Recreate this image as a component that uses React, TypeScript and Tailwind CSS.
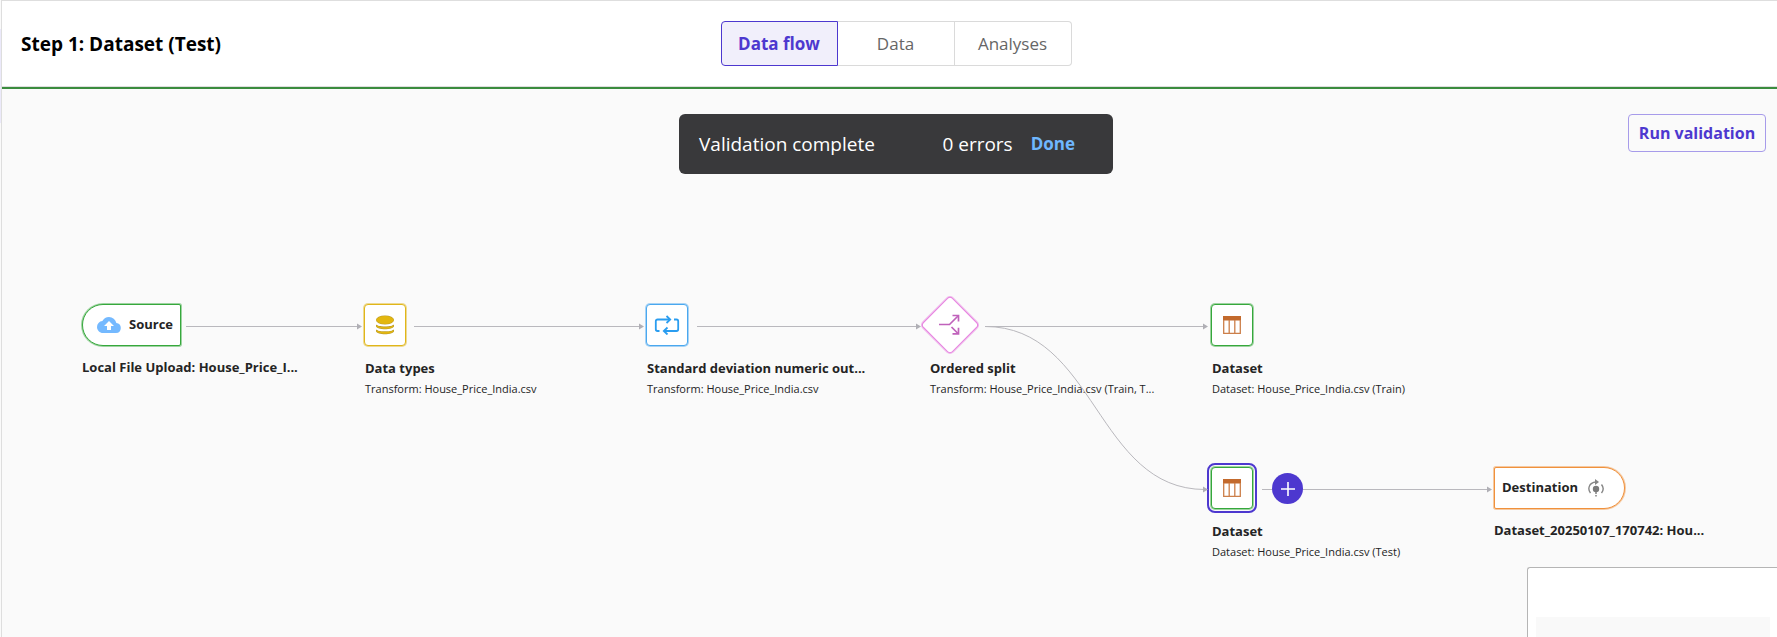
import type { ReactNode } from "react";

const tabs = ["Data flow", "Data", "Analyses"];

function CloudIcon() {
  return (
    <svg viewBox="0 0 24 16" className="h-4 w-6" aria-hidden="true">
      <path
        fill="#74b9ff"
        d="M19.35 6.04A7.49 7.49 0 0 0 12 0C9.11 0 6.6 1.64 5.35 4.04A5.99 5.99 0 0 0 0 10c0 3.31 2.69 6 6 6h13a5 5 0 0 0 .35-9.96z"
      />
      <path fill="#fff" d="M12 4l5 5h-3v4h-4V9H7z" />
    </svg>
  );
}

function DatabaseIcon() {
  return (
    <svg viewBox="0 0 20 20" className="size-5" aria-hidden="true">
      <g fill="#b99a2c">
        <path d="M1 14c1 2.500 17 2.500 18 0v2.300c-1 4-17 4-18 0z" />
        <path d="M1 9c1 3 17 3 18 0v2.300c-1 4-17 4-18 0z" />
        <ellipse cx="10" cy="5" rx="9" ry="4.600" />
      </g>
      <g fill="#e3b70f">
        <path d="M1.500 15c1.500 2.500 15.500 2.500 17 0v1.300c-1.500 3.300-15.500 3.300-17 0z" />
        <path d="M1.500 10c1.500 3 15.500 3 17 0v1.300c-1.500 3.300-15.500 3.300-17 0z" />
        <ellipse cx="10" cy="5" rx="8.600" ry="4" />
      </g>
      <path d="M1 8.300c2 3 16 3 18 0M1 13.300c2 3 16 3 18 0" fill="none" stroke="#fff" strokeWidth="1.300" />
    </svg>
  );
}

function RepeatIcon() {
  return (
    <svg viewBox="0 0 26 20" className="h-5 w-[26px]" fill="none" stroke="#2a9df0" strokeWidth="1.800" aria-hidden="true">
      <path d="M5.500 16H3.500A1.700 1.700 0 0 1 1.800 14.300V6.200A1.700 1.700 0 0 1 3.500 4.500H16" />
      <path d="M12.500 1l3.700 3.500-3.700 3.500" />
      <path d="M20 4.500h2.500a1.700 1.700 0 0 1 1.700 1.700v8.100a1.700 1.700 0 0 1-1.700 1.700H10" />
      <path d="M13.500 12.500L9.800 16l3.700 3.500" />
    </svg>
  );
}

function SplitIcon() {
  return (
    <svg viewBox="0 0 22 22" className="size-[22px]" fill="none" stroke="#c062bb" strokeWidth="1.700" aria-hidden="true">
      <path d="M0 10.500h10.500L19 2" />
      <path d="M13.500 1.500H19.500V7.500" />
      <path d="M12.500 13l6.500 6.500" />
      <path d="M13.500 19.800H19.500v-6" />
    </svg>
  );
}

function TableIcon() {
  return (
    <svg viewBox="0 0 18 18" className="size-[18px]" aria-hidden="true">
      <rect width="18" height="4.500" fill="#c36a2d" />
      <path d="M.7 4v13.300h16.600V4M6.200 4v13M11.800 4v13" fill="none" stroke="#cc7f4a" strokeWidth="1.300" />
    </svg>
  );
}

function DeployIcon() {
  return (
    <svg viewBox="0 0 16 18" className="h-[18px] w-4" aria-hidden="true">
      <g fill="none" stroke="#858585" strokeWidth="1.400">
        <path d="M2.500 14C-.5 10.500.5 3.500 8 3" />
        <path d="M13.500 14c2-2.500 2-6 0-8.500" />
      </g>
      <path d="M7 0l4 3-4 3z" fill="#858585" />
      <circle cx="8" cy="10" r="3.200" fill="#7a7a7a" />
      <path d="M7.300 12h1.400v3H7.300zM7.300 16h1.400v1.500H7.300z" fill="#7a7a7a" />
    </svg>
  );
}

function Tile({ tone, children }: { tone: string; children: ReactNode }) {
  return (
    <button type="button" className={`flex size-[42px] items-center justify-center rounded-[4px] border bg-white ${tone}`}>
      {children}
    </button>
  );
}

function Labels({ title, detail }: { title: string; detail?: string }) {
  return (
    <div className={detail ? "mt-3 pl-px whitespace-nowrap" : "mt-[11px] whitespace-nowrap"}>
      <h2 className="text-[13px] leading-5 font-bold">{title}</h2>
      {detail && <p className="text-[11px] leading-[22px]">{detail}</p>}
    </div>
  );
}

export default function App() {
  return (
    <div className="flex min-h-screen bg-[#fafafa] font-['Open_Sans','Noto_Sans',sans-serif] text-[#242424]">
      <div className="w-px bg-[#fafafa] pt-[29px]">
        <div className="h-[94px] bg-[#ebe9fa]" />
      </div>
      <div className="flex min-w-0 flex-1 flex-col border-t border-l border-[#dedede]">
        <header className="grid grid-cols-[1fr_auto_1fr] items-center border-b border-[#dedede] bg-white py-5 pr-[6px] pl-[19px]">
          <h1 className="text-[19px] leading-7 font-bold text-black">Step 1: Dataset (Test)</h1>
          <nav className="flex">
            {tabs.map((tab, i) => (
              <button
                key={tab}
                type="button"
                className={
                  i === 0
                    ? "h-[45px] w-[117px] rounded-l-[4px] border border-[#4d38cf] bg-[#f1effb] text-[17px] font-bold text-[#4d38cf]"
                    : "h-[45px] w-[117px] border border-l-0 border-[#dadada] text-[17px] text-[#666] last:rounded-r-[4px]"
                }
              >
                {tab}
              </button>
            ))}
          </nav>
        </header>

        <main className="relative flex-1 overflow-hidden border-t-2 border-[#3b8c3e]">
          <div className="grid grid-cols-[1fr_auto_1fr] items-start pt-[25px] pr-[11px] pl-6">
            <div
              role="status"
              className="col-start-2 flex h-[60px] w-[434px] items-center rounded-[6px] bg-[#39393b] pr-[38px] pl-5 text-[19px] text-white"
            >
              <span className="flex-1">Validation complete</span>
              <span>0 errors</span>
              <button type="button" className="ml-[18px] text-[17px] font-bold text-[#6fb7ff]">
                Done
              </button>
            </div>
            <button
              type="button"
              className="h-[38px] w-[138px] justify-self-end rounded-[4px] border border-[#a79bea] text-base font-bold whitespace-nowrap text-[#4d38cf]"
            >
              Run validation
            </button>
          </div>

          <div className="absolute top-[215px] left-[80px]">
            <button
              type="button"
              className="flex h-[42px] w-[99px] items-center gap-2 rounded-l-[21px] rounded-r-[2px] border border-[#36a83c] bg-white pl-[14px] text-[13px] font-bold shadow-[0_0_0_1px_#36a83c77]"
            >
              <CloudIcon />
              Source
            </button>
            <Labels title="Local File Upload: House_Price_I..." />
          </div>
          <div className="absolute top-[215px] left-[362px]">
            <Tile tone="border-[#e0b61b] shadow-[0_0_0_1px_#e0b61b77]">
              <DatabaseIcon />
            </Tile>
            <Labels title="Data types" detail="Transform: House_Price_India.csv" />
          </div>
          <div className="absolute top-[215px] left-[644px]">
            <Tile tone="border-[#4aa8ef] shadow-[0_0_0_1px_#4aa8ef77]">
              <RepeatIcon />
            </Tile>
            <Labels title="Standard deviation numeric out..." detail="Transform: House_Price_India.csv" />
          </div>
          <div className="absolute top-[215px] left-[927px]">
            <button
              type="button"
              className="flex size-[42px] rotate-45 items-center justify-center rounded-[4px] border border-[#e67fdf] bg-white shadow-[0_0_0_1px_#e67fdf77]"
            >
              <span className="-rotate-45">
                <SplitIcon />
              </span>
            </button>
            <Labels title="Ordered split" detail="Transform: House_Price_India.csv (Train, T..." />
          </div>
          <div className="absolute top-[215px] left-[1209px]">
            <Tile tone="border-[#36a83c] shadow-[0_0_0_1px_#36a83c77]">
              <TableIcon />
            </Tile>
            <Labels title="Dataset" detail="Dataset: House_Price_India.csv (Train)" />
          </div>
          <div className="absolute top-[378px] left-[1209px]">
            <Tile tone="border-[#36a83c] shadow-[0_0_0_1px_#36a83c77] outline-2 outline-offset-2 outline-[#4d38cf]">
              <TableIcon />
            </Tile>
            <Labels title="Dataset" detail="Dataset: House_Price_India.csv (Test)" />
          </div>
          <div className="absolute top-[378px] left-[1492px]">
            <button
              type="button"
              className="flex h-[42px] w-[131px] items-center gap-[10px] rounded-l-[2px] rounded-r-[21px] border border-[#f0913c] bg-white pl-[7px] text-[13px] font-bold shadow-[0_0_0_1px_#f0913c77]"
            >
              Destination
              <DeployIcon />
            </button>
            <Labels title="Dataset_20250107_170742: Hou..." />
          </div>

          <svg
            width="1700"
            height="500"
            viewBox="0 0 1700 500"
            className="pointer-events-none absolute top-0 left-0"
            fill="none"
            stroke="#b9b8bd"
            aria-hidden="true"
          >
            <path d="M184 237.500H357M412 237.500H639M695 237.500H915M983 237.500H1203M1260 400.500H1486" />
            <path d="M983 237.500C1094 237.500 1094 400.500 1203 400.500" />
            <path
              fill="#b0afb5"
              stroke="none"
              d="M355 234.500l5 3-5 3zM637 234.500l5 3-5 3zM914 234.500l5 3-5 3zM1201 234.500l5 3-5 3zM1201 397.500l5 3-5 3zM1485 397.500l5 3-5 3z"
            />
          </svg>

          <button
            type="button"
            aria-label="Add step"
            className="absolute top-[384px] left-[1270px] flex size-[31px] items-center justify-center rounded-full bg-[#4d38cf]"
          >
            <svg viewBox="0 0 14 14" className="size-[14px]" stroke="#fff" strokeWidth="1.600" aria-hidden="true">
              <path d="M7 0v14M0 7h14" />
            </svg>
          </button>

          <div className="absolute right-0 bottom-0 h-[70px] w-[250px] rounded-tl-[3px] border-t border-l border-[#b5b5b5] bg-white pt-[49px] pr-[7px] pl-2">
            <div className="h-full bg-[#f9f9f9]" />
          </div>
        </main>
      </div>
    </div>
  );
}
